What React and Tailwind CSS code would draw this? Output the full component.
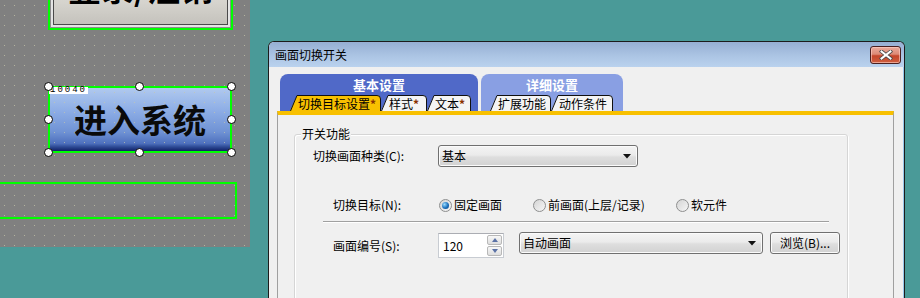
import React from "react";

const dots =
  "bg-[#808080] bg-[radial-gradient(circle_at_4.5px_5.5px,#b4b49e_0.9px,transparent_0.9px)] bg-[length:10px_10px]";

function SubTab({ w, label, active, className }) {
  const fill = active ? "#f8c000" : "#f4f4f4";
  const h = 16;
  return (
    <div className={"relative h-[16px] shrink-0 " + className}>
      <svg className="absolute inset-0" width={w} height={h} viewBox={`0 0 ${w} ${h}`}>
        <path d={`M0 ${h} L7 0.5 H${w - 4} Q${w - 0.5} 0.5 ${w - 0.5} 4 V${h} Z`} fill={fill} />
        <path
          d={`M0.5 ${h} L7 0.5 H${w - 4} Q${w - 0.5} 0.5 ${w - 0.5} 4 V${h}`}
          fill="none"
          stroke="#101010"
          strokeWidth="1"
        />
      </svg>
      <div className="relative pl-[8px] text-[12px] leading-[17px] whitespace-nowrap">{label}</div>
    </div>
  );
}

function Star() {
  return <span className="text-[#8a3000] font-bold">*</span>;
}

function Arrow() {
  return (
    <svg width="8" height="5" viewBox="0 0 8 5">
      <path d="M0 0 H8 L4 4.5 Z" fill="#111" />
    </svg>
  );
}

function Combo({ className, text }) {
  return (
    <div
      className={
        "flex items-center justify-between h-[22px] pl-[3px] pr-[6px] border border-[#707070] rounded-[3px] bg-[linear-gradient(to_bottom,#f4f4f4,#ebebeb_45%,#dedede_55%,#d2d2d2)] shadow-[inset_0_0_0_1px_#fbfbfb] " +
        className
      }
    >
      <span className="leading-none">{text}</span>
      <Arrow />
    </div>
  );
}

function Radio({ checked, label, className }) {
  return (
    <div className={"flex items-center gap-[2px] " + className}>
      <span className="w-[13px] h-[13px] rounded-full border border-[#8e8f8f] bg-[linear-gradient(135deg,#d4d4d4,#f6f6f6)] flex items-center justify-center">
        {checked && (
          <span className="w-[7px] h-[7px] rounded-full bg-[radial-gradient(circle_at_35%_35%,#9bdcff,#1b70bc_55%,#0b3f7c)]" />
        )}
      </span>
      <span className="leading-[16px] whitespace-nowrap">{label}</span>
    </div>
  );
}

function SpinBtn({ up }) {
  return (
    <div className="flex-1 flex items-center justify-center border border-[#b8b8b8] rounded-[2px] bg-[linear-gradient(to_bottom,#f8f8f8,#dedede)]">
      <svg width="6" height="4" viewBox="0 0 6 4">
        <path d={up ? "M0 4 H6 L3 0 Z" : "M0 0 H6 L3 4 Z"} fill="#5b72a6" />
      </svg>
    </div>
  );
}

function Handle({ className }) {
  return (
    <span className={"absolute w-[9px] h-[9px] rounded-full bg-white border border-black " + className} />
  );
}

function Canvas() {
  return (
    <div className={"w-[250px] h-[247px] shrink-0 overflow-hidden " + dots}>
      {/* 登录/注销 button, cut off at the top */}
      <div className="ml-[48px] -mt-[37px] w-[185px] h-[67px] border-2 border-[#00ff00] bg-[#8c8c8c] p-px">
        <div className="h-full border-2 border-[#e4e4e4]">
          <div className="h-full pb-[18px] border border-[#4a4a4a] bg-[linear-gradient(to_bottom,#e4e2dc,#d6d4ce_60%,#c4c2bc)] flex items-center justify-center text-[33px] font-bold leading-none whitespace-nowrap">
            登录/注销
          </div>
        </div>
      </div>

      {/* 进入系统 button, selected */}
      <div className="relative ml-[48px] mt-[56px] w-[184px] h-[67px] border-2 border-[#00ff00] bg-[radial-gradient(circle_at_4.5px_4.5px,rgba(200,200,170,0.7)_0.9px,transparent_0.9px),linear-gradient(to_bottom,#b0c9ee,#8eaee6_35%,#6f92d4_70%,#4e70bd_88%,#2a4690_94%,#101f66)] bg-[length:10px_10px,100%_100%]">
        <div className="h-full flex items-center justify-center text-[33px] font-bold leading-none text-[#0a0a0a]">
          进入系统
        </div>
        <span className="absolute -top-[1px] -left-[1px] h-[7px] bg-white px-[1px] text-[9px] leading-[7px] tracking-[2px] font-['Liberation_Mono',monospace] text-black">
          10040
        </span>
        <Handle className="-left-[6px] -top-[6px]" />
        <Handle className="left-[85px] -top-[6px]" />
        <Handle className="-right-[6px] -top-[6px]" />
        <Handle className="-left-[6px] top-[27px]" />
        <Handle className="-right-[6px] top-[27px]" />
        <Handle className="-left-[6px] -bottom-[6px]" />
        <Handle className="left-[85px] -bottom-[6px]" />
        <Handle className="-right-[6px] -bottom-[6px]" />
      </div>

      {/* empty selection rectangle */}
      <div className="-ml-[2px] mt-[29px] w-[239px] h-[37px] border-2 border-[#00ff00]" />
    </div>
  );
}

function Dialog() {
  return (
    <div className="ml-[18px] mt-[41px] w-[637px] h-[262px] shrink-0 flex flex-col bg-[#f0f0f0] border border-b-0 border-[#1c1c1c] rounded-t-[6px] overflow-hidden shadow-[inset_-1px_0_0_#98c8ec]">
      <div className="h-[25px] shrink-0 flex items-center justify-between pl-[6px] pr-[3px] bg-[linear-gradient(to_bottom,#96afd3,#adc6e5_60%,#bad2ee)]">
        <span className="leading-none">画面切换开关</span>
        <div className="w-[31px] h-[18px] flex items-center justify-center border border-[#4a2020] rounded-[3px] bg-[linear-gradient(to_bottom,#eaaa9c,#dd8a76_45%,#c4452a_55%,#cf5f40)] shadow-[inset_0_0_0_1px_rgba(255,210,200,0.6)]">
          <svg width="14" height="10" viewBox="0 0 14 10">
            <path d="M2.5 1.5 L11.5 8.5 M11.5 1.5 L2.5 8.5" stroke="#4a4a4a" strokeWidth="3.6" strokeLinecap="square" />
            <path d="M2.5 1.5 L11.5 8.5 M11.5 1.5 L2.5 8.5" stroke="#ffffff" strokeWidth="2" strokeLinecap="square" />
          </svg>
        </div>
      </div>

      <div className="flex-1 flex flex-col px-[8px] pt-[7px]">
        <div className="flex gap-[3px] ml-[3px]">
          <div className="w-[198px] h-[37px] rounded-t-[8px] bg-[#5069c8] flex flex-col">
            <div className="h-[21px] flex items-center justify-center text-white font-bold text-[13px] leading-none">
              基本设置
            </div>
            <div className="flex pl-[10px]">
              <SubTab w={91} className="w-[91px]" active label={<>切换目标设置<Star /></>} />
              <SubTab w={46} className="w-[46px]" label={<>样式<Star /></>} />
              <SubTab w={44} className="w-[44px]" label={<>文本<Star /></>} />
            </div>
          </div>
          <div className="w-[142px] h-[37px] rounded-t-[8px] bg-[#899fe3] flex flex-col">
            <div className="h-[21px] flex items-center justify-center text-white font-bold text-[13px] leading-none">
              详细设置
            </div>
            <div className="flex pl-[9px]">
              <SubTab w={61} className="w-[61px]" label="扩展功能" />
              <SubTab w={62} className="w-[62px]" label="动作条件" />
            </div>
          </div>
        </div>

        <div className="w-[617px] flex-1 border-l border-r border-[#a0a0a0] border-t-4 border-t-[#f8c000]">
          <div className="ml-[16px] mt-[19px] w-[554px] h-[200px] border border-[#d5d5d5] rounded-[3px] shadow-[inset_1px_1px_0_#ffffff,1px_1px_0_#ffffff]">
            <div className="-mt-[9px] ml-[6px] w-fit px-[1px] bg-[#f0f0f0] leading-[16px]">开关功能</div>

            <div className="flex items-center mt-[3px] ml-[18px]">
              <span className="w-[125px] leading-none">切换画面种类(C):</span>
              <Combo className="w-[200px]" text="基本" />
            </div>

            <div className="flex items-center mt-[30px] ml-[38px] h-[16px]">
              <span className="w-[106px] leading-none">切换目标(N):</span>
              <Radio className="w-[94px]" checked label="固定画面" />
              <Radio className="w-[143px]" label="前画面(上层/记录)" />
              <Radio label="软元件" />
            </div>

            <div className="mt-[8px] ml-[28px] w-[506px] h-[2px] border-t border-[#a0a0a0] border-b border-b-white" />

            <div className="flex items-start mt-[10px] ml-[38px]">
              <span className="w-[105px] h-[25px] flex items-center leading-none">画面编号(S):</span>
              <div className="w-[66px] h-[25px] flex bg-white border border-[#c8ccd2] border-t-[#abadb3]">
                <span className="flex-1 flex items-center pl-[4px] leading-none">120</span>
                <div className="w-[16px] flex flex-col gap-px py-px pr-px">
                  <SpinBtn up />
                  <SpinBtn />
                </div>
              </div>
              <Combo className="ml-[15px] -mt-px w-[244px]" text="自动画面" />
              <div className="ml-[7px] -mt-px w-[70px] h-[22px] flex items-center justify-center border border-[#707070] rounded-[3px] bg-[linear-gradient(to_bottom,#f4f4f4,#ebebeb_45%,#dedede_55%,#d2d2d2)] shadow-[inset_0_0_0_1px_#fbfbfb] leading-none">
                浏览(B)...
              </div>
            </div>
          </div>
        </div>
      </div>
    </div>
  );
}

export default function App() {
  return (
    <div className="flex items-start w-[920px] h-[298px] overflow-hidden bg-[#4a9a98] font-['Noto_Sans_CJK_SC',sans-serif] text-[12px] text-black">
      <Canvas />
      <Dialog />
    </div>
  );
}
